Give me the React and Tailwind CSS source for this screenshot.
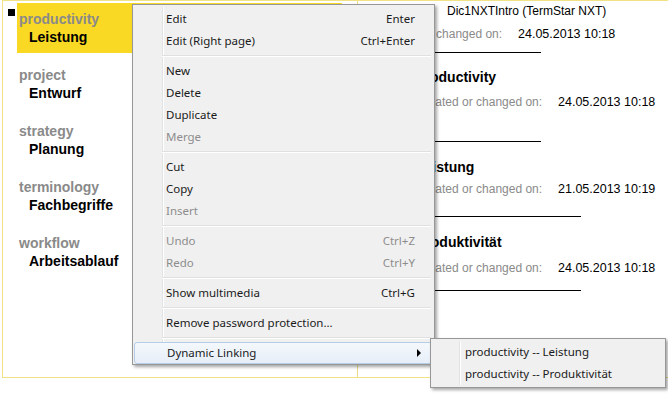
import React from "react";

const terms = [
  { term: "productivity", translation: "Leistung", selected: true },
  { term: "project", translation: "Entwurf" },
  { term: "strategy", translation: "Planung" },
  { term: "terminology", translation: "Fachbegriffe" },
  { term: "workflow", translation: "Arbeitsablauf" },
];

const menuItems = [
  { label: "Edit", shortcut: "Enter" },
  { label: "Edit (Right page)", shortcut: "Ctrl+Enter" },
  { sep: true },
  { label: "New" },
  { label: "Delete" },
  { label: "Duplicate" },
  { label: "Merge", disabled: true },
  { sep: true },
  { label: "Cut" },
  { label: "Copy" },
  { label: "Insert", disabled: true },
  { sep: true },
  { label: "Undo", shortcut: "Ctrl+Z", disabled: true },
  { label: "Redo", shortcut: "Ctrl+Y", disabled: true },
  { sep: true },
  { label: "Show multimedia", shortcut: "Ctrl+G" },
  { sep: true },
  { label: "Remove password protection..." },
  { sep: true },
  { label: "Dynamic Linking", submenu: true, active: true },
];

const entries = [
  { heading: "productivity", date: "24.05.2013 10:18", mt: "mt-[15px]", gap: "mt-[9px]", line: "w-[125px] mt-[31px]" },
  { heading: "Leistung", date: "21.05.2013 10:19", mt: "mt-[16px]", gap: "mt-[6px]", line: "w-[165px] mt-[19px]" },
  { heading: "Produktivität", date: "24.05.2013 10:18", mt: "mt-[16px]", gap: "mt-[10px]", line: "w-[165px] mt-[14px]" },
];

function MenuRow({ item }) {
  if (item.sep) {
    return (
      <div className="h-[8px] flex flex-col justify-center ml-[27px] mr-[1px]">
        <div className="h-px bg-[#e0e0e0]" />
        <div className="h-px bg-white" />
      </div>
    );
  }
  return (
    <div
      className={`h-[22px] flex items-center pl-[31px] pr-[17px] rounded-[3px] ${
        item.active
          ? "bg-gradient-to-b from-[#f4f8fc] to-[#e7eef8] border border-[#b6cde6] -mx-[1px] pl-[32px] pr-[18px]"
          : ""
      } ${item.disabled ? "text-[#8d8d8d]" : "text-[#1a1a1a]"}`}
    >
      <span className="flex-1">{item.label}</span>
      {item.shortcut && <span>{item.shortcut}</span>}
      {item.submenu && (
        <svg width="5" height="8" viewBox="0 0 5 8" className="mr-[-8px]">
          <path d="M0 0 L4 4 L0 8 Z" fill="#000" />
        </svg>
      )}
    </div>
  );
}

export default function App() {
  return (
    <div className="relative w-[668px] h-[395px] bg-white overflow-hidden font-['Liberation_Sans',Arial,sans-serif]">
      <div className="ml-[2px] w-[680px] h-[378px] border border-[#efe287] flex">
        {/* left: term list */}
        <div className="w-[355px] border-r border-[#e9dc8a] flex pt-[2px]">
          <div className="w-[7px] h-[7px] bg-black ml-[5px] mt-[6px]" />
          <div className="ml-[2px] flex flex-col gap-[6px]">
            {terms.map((t) => (
              <div
                key={t.term}
                className={`w-[325px] h-[50px] pt-[7px] font-bold text-[14px] leading-[18px] ${
                  t.selected ? "bg-[#fad924]" : ""
                }`}
              >
                <div className="pl-[2px] text-[#8a8a8a]">{t.term}</div>
                <div className="pl-[12px] text-black">{t.translation}</div>
              </div>
            ))}
          </div>
        </div>

        {/* right: entry details */}
        <div className="flex-1 pl-[18px] pt-[3px] text-[12px] leading-[15px]">
          <div className="pl-[71px] text-black">Dic1NXTIntro (TermStar NXT)</div>
          <div className="flex mt-[8px]">
            <span className="w-[142px] text-[#8a8a8a]">Created or changed on:</span>
            <span className="text-black text-[12.5px]">24.05.2013 10:18</span>
          </div>
          <div className="w-[165px] h-px bg-black mt-[10px]" />

          <div className="pl-[40px]">
            {entries.map((e) => (
              <div key={e.heading}>
                <div className={`${e.mt} font-bold text-[14px] leading-[18px] text-black`}>{e.heading}</div>
                <div className={`flex ${e.gap}`}>
                  <span className="w-[142px] text-[#8a8a8a]">Created or changed on:</span>
                  <span className="text-black text-[12.5px]">{e.date}</span>
                </div>
                <div className={`h-px bg-black ${e.line}`} />
              </div>
            ))}
          </div>
        </div>
      </div>

      {/* context menu */}
      <div className="absolute left-[132px] top-[4px] w-[303px] border border-[#979797] bg-[#f0f0f0] px-[2px] pt-[3px] pb-0 shadow-[2px_2px_3px_rgba(0,0,0,0.35)] font-['Noto_Sans',sans-serif] text-[11.5px]">
        <div className="absolute left-[29px] top-[2px] bottom-[2px] w-px bg-[#e2e3e3]" />
        <div className="absolute left-[30px] top-[2px] bottom-[2px] w-px bg-white" />
        <div className="relative">
          {menuItems.map((item, i) => (
            <MenuRow key={i} item={item} />
          ))}
        </div>
      </div>

      {/* submenu */}
      <div className="absolute left-[430px] top-[338px] w-[236px] border border-[#979797] bg-[#f0f0f0] p-[2px] shadow-[2px_2px_3px_rgba(0,0,0,0.35)] font-['Noto_Sans',sans-serif] text-[11.5px] text-[#1a1a1a]">
        <div className="absolute left-[28px] top-[2px] bottom-[2px] w-px bg-[#e2e3e3]" />
        <div className="absolute left-[29px] top-[2px] bottom-[2px] w-px bg-white" />
        <div className="relative">
          <div className="h-[22px] flex items-center pl-[32px]">productivity -- Leistung</div>
          <div className="h-[22px] flex items-center pl-[32px]">productivity -- Produktivität</div>
        </div>
      </div>
    </div>
  );
}
